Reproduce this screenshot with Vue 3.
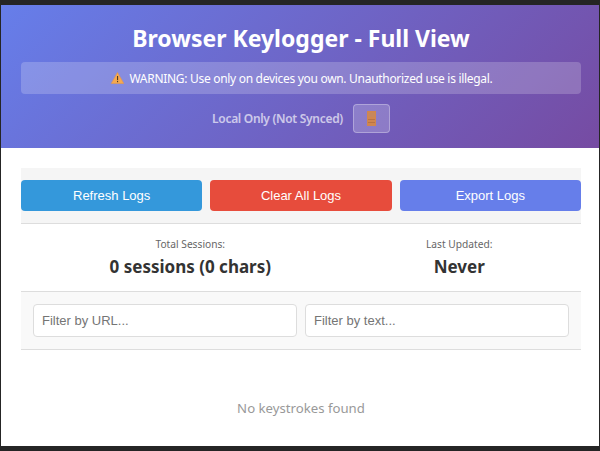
<template>
  <div class="popup">
    <header class="header">
      <h1>Browser Keylogger - Full View</h1>
      <div class="warning">
        <svg class="warn-icon" width="13" height="12" viewBox="0 0 13 12">
          <path d="M6.5 .5 L12.8 11.5 H.2 Z" fill="#f6a94f" stroke="#e8963f" stroke-width=".5" stroke-linejoin="round" />
          <rect x="6" y="4" width="1.1" height="4.2" fill="#4a3a2a" />
          <rect x="6" y="9" width="1.1" height="1.2" fill="#4a3a2a" />
        </svg>
        <span>WARNING: Use only on devices you own. Unauthorized use is illegal.</span>
      </div>
      <div class="sync-row">
        <span class="sync-label">Local Only (Not Synced)</span>
        <button class="door-btn" type="button" aria-label="Door">
          <svg width="9" height="15" viewBox="0 0 9 15">
            <rect width="9" height="15" fill="#d0864f" />
            <rect x="1.5" y="1.5" width="6" height="4.5" fill="#c6875c" />
            <rect x="1" y="8" width="7" height="1" fill="#b87445" />
            <rect x="1" y="11" width="7" height="1" fill="#b87445" />
          </svg>
        </button>
      </div>
    </header>

    <main class="content">
      <div class="controls">
        <button class="btn refresh" type="button">Refresh Logs</button>
        <button class="btn clear" type="button">Clear All Logs</button>
        <button class="btn export" type="button">Export Logs</button>
      </div>

      <div class="stats">
        <div v-for="s in stats" :key="s.label" class="stat">
          <div class="stat-label">{{ s.label }}</div>
          <div class="stat-value">{{ s.value }}</div>
        </div>
      </div>

      <div class="filters">
        <input type="text" placeholder="Filter by URL...">
        <input type="text" placeholder="Filter by text...">
      </div>

      <div class="empty">No keystrokes found</div>
    </main>
  </div>
</template>

<script setup>
const stats = [
  { label: 'Total Sessions:', value: '0 sessions (0 chars)' },
  { label: 'Last Updated:', value: 'Never' }
]
</script>

<style>
html, body {
  margin: 0;
  background: #252525;
}
</style>

<style scoped>
.popup {
  box-sizing: border-box;
  width: 600px;
  height: 451px;
  padding: 5px 1px;
  font-family: "Noto Sans", sans-serif;
  overflow: hidden;
}

.header {
  height: 143px;
  box-sizing: border-box;
  padding: 20px 18px 0 20px;
  background: linear-gradient(135deg, #667eea 0%, #764ba2 100%);
  color: #fff;
  text-align: center;
}

h1 {
  margin: 0 0 10px;
  font-size: 23px;
  line-height: 27px;
  font-weight: 700;
}

.warning {
  height: 32px;
  box-sizing: border-box;
  padding-left: 2px;
  display: flex;
  align-items: center;
  justify-content: center;
  gap: 5px;
  background: rgba(255, 255, 255, 0.2);
  border-radius: 4px;
  font-size: 12px;
  letter-spacing: -0.3px;
}

.sync-row {
  display: flex;
  align-items: center;
  justify-content: center;
  gap: 10px;
  margin-top: 10px;
}

.sync-label {
  font-size: 12px;
  font-weight: 600;
  letter-spacing: -0.3px;
  opacity: 0.65;
}

.door-btn {
  width: 37px;
  height: 29px;
  padding: 0;
  display: flex;
  align-items: center;
  justify-content: center;
  background: rgba(255, 255, 255, 0.2);
  border: 1px solid rgba(255, 255, 255, 0.3);
  border-radius: 4px;
}

.content {
  height: 298px;
  padding: 20px 18px 0 20px;
  box-sizing: border-box;
  background: #fff;
}

.controls {
  display: grid;
  grid-template-columns: 1fr 1fr 1fr;
  gap: 8px;
  padding: 12px 0;
  background: #f5f5f5;
  border-bottom: 1px solid #ddd;
}

.btn {
  height: 31px;
  border: 0;
  border-radius: 4px;
  color: #fff;
  font-family: "Liberation Sans", Arial, sans-serif;
  font-size: 13px;
}

.refresh { background: #3498db; }
.clear { background: #e74c3c; }
.export { background: #667eea; }

.stats {
  display: flex;
  justify-content: center;
  gap: 155px;
  height: 68px;
  box-sizing: border-box;
  padding-top: 12px;
  border-bottom: 1px solid #ddd;
  text-align: center;
}

.stat {
  display: flex;
  flex-direction: column;
  align-items: center;
}

.stat-label {
  font-size: 10.2px;
  line-height: 16px;
  color: #666;
}

.stat-value {
  margin-top: 3px;
  font-size: 17px;
  line-height: 24px;
  font-weight: 700;
  color: #333;
}

.filters {
  display: grid;
  grid-template-columns: 1fr 1fr;
  gap: 8px;
  padding: 12px;
  background: #f9f9f9;
  border-bottom: 1px solid #ddd;
}

input {
  box-sizing: border-box;
  width: 100%;
  height: 33px;
  padding: 0 8px;
  background: #fff;
  border: 1px solid #ddd;
  border-radius: 4px;
  outline: none;
  font-family: "Liberation Sans", Arial, sans-serif;
  font-size: 13px;
}

input::placeholder {
  color: #757575;
}

.empty {
  margin-top: 48px;
  text-align: center;
  font-size: 13.2px;
  line-height: 20px;
  color: #999;
}
</style>
